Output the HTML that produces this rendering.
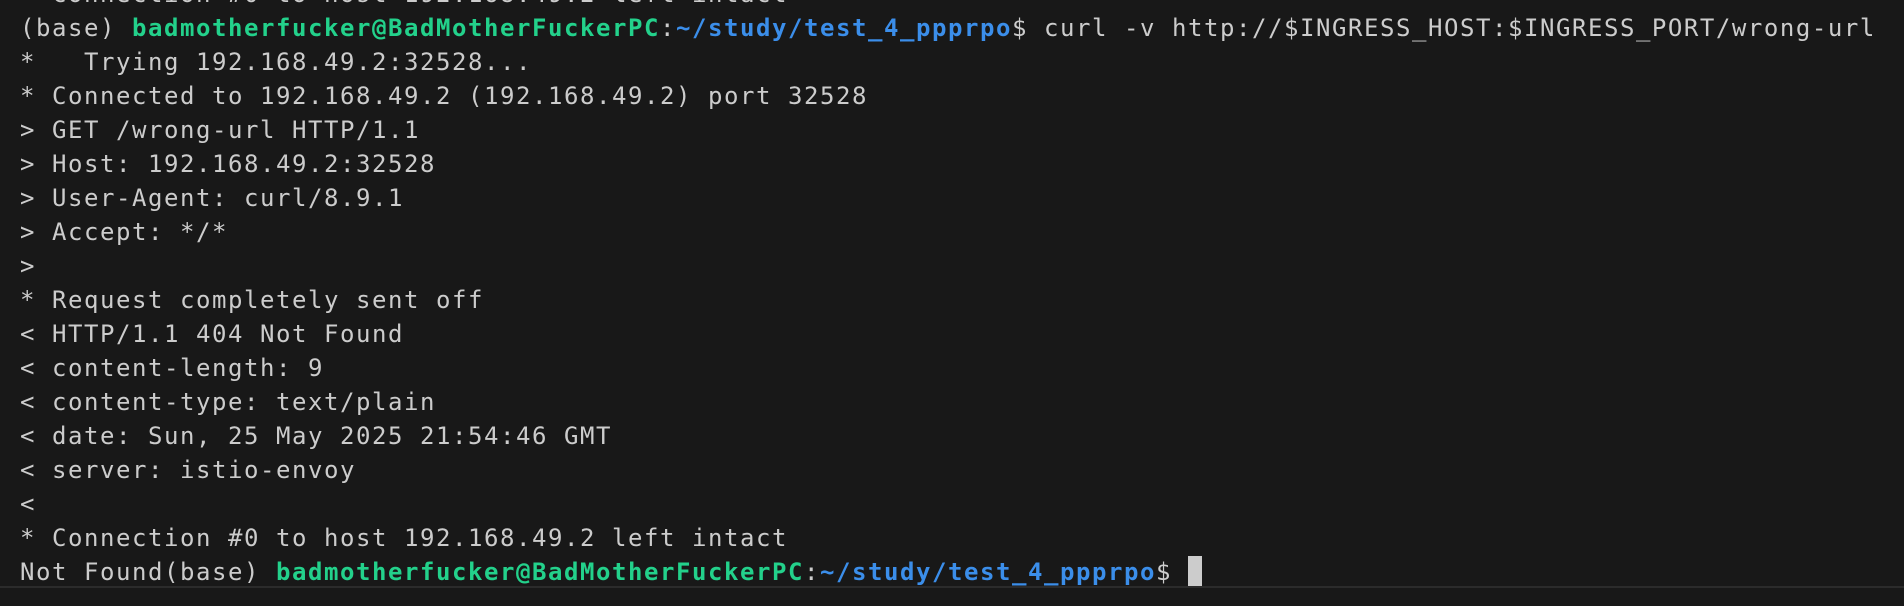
<!DOCTYPE html>
<html><head><style>
html,body{margin:0;padding:0;background:#181818;width:1904px;height:606px;overflow:hidden}
pre{margin:0;position:absolute;left:20px;top:-23px;font-family:"DejaVu Sans Mono","Liberation Mono",monospace;font-size:24px;letter-spacing:1.55px;line-height:34px;color:#cccccc;white-space:pre}
.g{color:#23d18b;font-weight:bold}
.b{color:#3b8eea;font-weight:bold}
.cur{display:inline-block;width:14px;height:30px;background:#cccccc;vertical-align:-6px}
.sep{position:absolute;left:0;top:586px;width:1904px;height:2px;background:#2b2b2b}
</style></head><body>
<pre>* Connection #0 to host 192.168.49.2 left intact
(base) <span class="g">badmotherfucker@BadMotherFuckerPC</span>:<span class="b">~/study/test_4_ppprpo</span>$ curl -v http://$INGRESS_HOST:$INGRESS_PORT/wrong-url
*   Trying 192.168.49.2:32528...
* Connected to 192.168.49.2 (192.168.49.2) port 32528
&gt; GET /wrong-url HTTP/1.1
&gt; Host: 192.168.49.2:32528
&gt; User-Agent: curl/8.9.1
&gt; Accept: */*
&gt;
* Request completely sent off
&lt; HTTP/1.1 404 Not Found
&lt; content-length: 9
&lt; content-type: text/plain
&lt; date: Sun, 25 May 2025 21:54:46 GMT
&lt; server: istio-envoy
&lt;
* Connection #0 to host 192.168.49.2 left intact
Not Found(base) <span class="g">badmotherfucker@BadMotherFuckerPC</span>:<span class="b">~/study/test_4_ppprpo</span>$ <span class="cur"></span></pre>
<div class="sep"></div>
</body></html>
